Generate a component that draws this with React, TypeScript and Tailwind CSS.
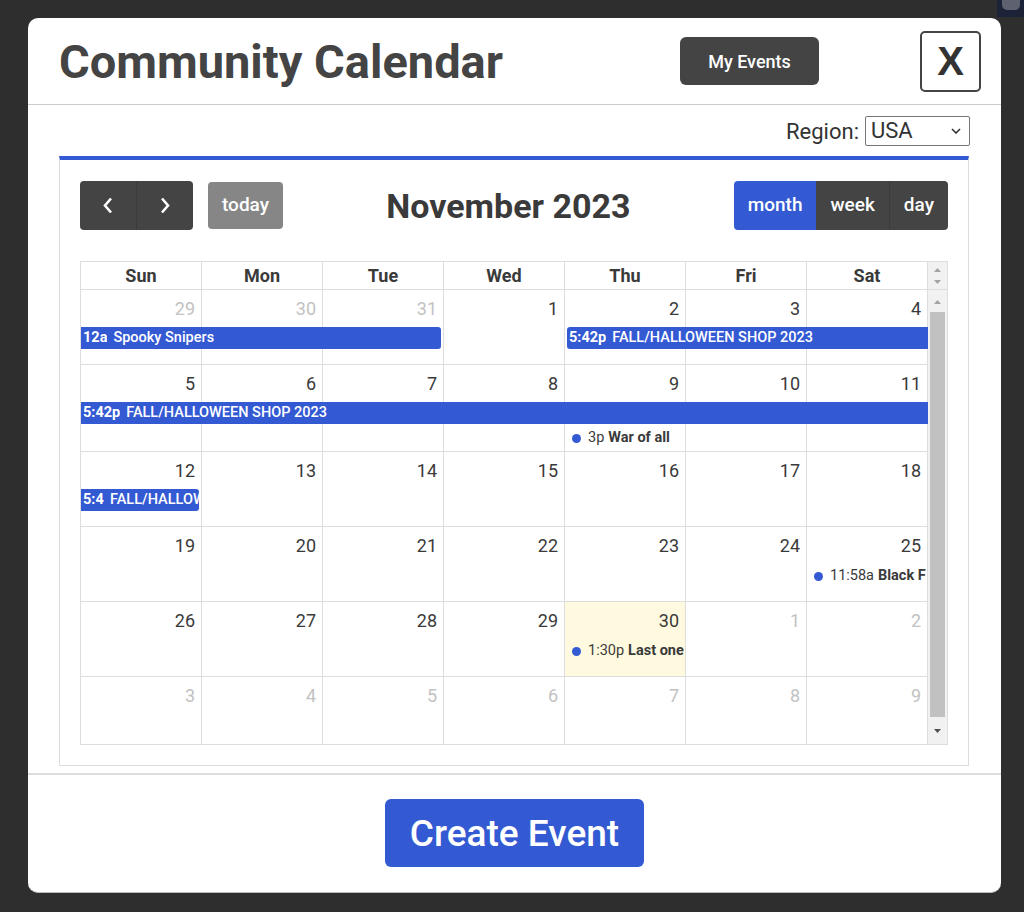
import React from 'react';

type Day = { n: number; other?: boolean; today?: boolean };
type Bar = { col: number; span: number; row: number; time: string; title: string; roundL: boolean; roundR: boolean; timeW?: string };
type Dot = { col: number; row: number; time: string; title: string };
type Week = { h: string; days: Day[]; bars: Bar[]; dots: Dot[] };

const DAY_NAMES = ['Sun', 'Mon', 'Tue', 'Wed', 'Thu', 'Fri', 'Sat'];

const COL_START = ['col-start-1', 'col-start-2', 'col-start-3', 'col-start-4', 'col-start-5', 'col-start-6', 'col-start-7'];
const COL_SPAN = ['col-span-1', 'col-span-2', 'col-span-3', 'col-span-4', 'col-span-5', 'col-span-6', 'col-span-7'];
const ROW_START = ['row-start-1', 'row-start-2', 'row-start-3'];

const mk = (nums: number[], otherUntil = -1, otherFrom = 99, today = -1): Day[] =>
  nums.map((n, i) => ({ n, other: i <= otherUntil || i >= otherFrom, today: i === today }));

const WEEKS: Week[] = [
  {
    h: 'h-[75px]',
    days: mk([29, 30, 31, 1, 2, 3, 4], 2),
    bars: [
      { col: 1, span: 3, row: 2, time: '12a', title: 'Spooky Snipers', roundL: false, roundR: true },
      { col: 5, span: 3, row: 2, time: '5:42p', title: 'FALL/HALLOWEEN SHOP 2023', roundL: true, roundR: false },
    ],
    dots: [],
  },
  {
    h: 'h-[87px]',
    days: mk([5, 6, 7, 8, 9, 10, 11]),
    bars: [{ col: 1, span: 7, row: 2, time: '5:42p', title: 'FALL/HALLOWEEN SHOP 2023', roundL: false, roundR: false }],
    dots: [{ col: 5, row: 3, time: '3p', title: 'War of all' }],
  },
  {
    h: 'h-[75px]',
    days: mk([12, 13, 14, 15, 16, 17, 18]),
    bars: [{ col: 1, span: 1, row: 2, time: '5:42p', title: 'FALL/HALLOWEEN SHOP 2023', roundL: false, roundR: true, timeW: 'w-[21px]' }],
    dots: [],
  },
  {
    h: 'h-[75px]',
    days: mk([19, 20, 21, 22, 23, 24, 25]),
    bars: [],
    dots: [{ col: 7, row: 2, time: '11:58a', title: 'Black Friday' }],
  },
  {
    h: 'h-[75px]',
    days: mk([26, 27, 28, 29, 30, 1, 2], -1, 5, 4),
    bars: [],
    dots: [{ col: 5, row: 2, time: '1:30p', title: 'Last one' }],
  },
  {
    h: 'h-[75px]',
    days: mk([3, 4, 5, 6, 7, 8, 9], 6),
    bars: [],
    dots: [],
  },
];

function Tri({ up, color }: { up: boolean; color: string }) {
  return (
    <svg width="7" height="4" viewBox="0 0 7 4">
      <polygon points={up ? '3.5,0 7,4 0,4' : '0,0 7,0 3.5,4'} fill={color} />
    </svg>
  );
}

function WeekRow({ week, last }: { week: Week; last: boolean }) {
  return (
    <div className={`${week.h} shrink-0 grid grid-cols-7 grid-rows-[37px_24px_auto_1fr] ${last ? '' : 'border-b border-[#ddd]'}`}>
      {week.days.map((d, i) => (
        <div
          key={i}
          className={`${COL_START[i]} row-span-full border-r border-[#ddd] ${d.today ? 'bg-[#fffadf]' : ''}`}
        >
          <div className={`h-[37px] pt-[8px] pr-[6px] text-right text-[18px] leading-[22px] ${d.other ? 'text-[#c2c2c2]' : 'text-[#3a3a3a]'}`}>
            {d.n}
          </div>
        </div>
      ))}
      {week.bars.map((b, i) => (
        <div
          key={'b' + i}
          className={`${COL_START[b.col - 1]} ${COL_SPAN[b.span - 1]} ${ROW_START[b.row - 1]} h-[22px] bg-[#3359d3] text-white flex items-center pl-[2px] overflow-hidden whitespace-nowrap text-[14.5px] leading-[22px] ${b.roundL ? 'rounded-l-[3px] ml-[2px]' : ''} ${b.roundR ? 'rounded-r-[3px] mr-[3px]' : ''}`}
        >
          <span className={`font-bold mr-[6px] overflow-hidden shrink-0 ${b.timeW ?? ''}`}>{b.time}</span>
          <span className="font-medium overflow-hidden">{b.title}</span>
        </div>
      ))}
      {week.dots.map((e, i) => (
        <div
          key={'d' + i}
          className={`${COL_START[e.col - 1]} col-span-1 ${ROW_START[e.row - 1]} h-[22px] mt-[1px] mr-[2px] flex items-center pl-[7px] overflow-hidden whitespace-nowrap text-[14.5px] text-[#3a3a3a]`}
        >
          <span className="w-[9px] h-[9px] rounded-full bg-[#3359d3] shrink-0 mr-[7px]" />
          <span className="mr-[4px]">{e.time}</span>
          <span className="font-bold">{e.title}</span>
        </div>
      ))}
    </div>
  );
}

export default function App() {
  return (
    <div className="w-[1024px] h-[912px] bg-[#2e2e2e] pt-[18px] pl-[28px] relative overflow-hidden font-['Roboto',sans-serif]">
      {/* bit of the page behind the overlay */}
      <div className="absolute top-0 right-0 w-[27px] h-[17px] bg-[#1c2238] flex items-start justify-center">
        <div className="w-[18px] h-[10px] rounded-b-[5px] bg-[#5d6170]" />
      </div>

      <div className="w-[973px] h-[875px] bg-white rounded-[10px] flex flex-col overflow-hidden border-b border-[#bbb]">
        {/* Header */}
        <div className="h-[87px] shrink-0 border-b border-[#ccc] flex items-center pl-[31px] pr-[20px]">
          <h1 className="text-[47px] font-bold text-[#444] leading-none">Community Calendar</h1>
          <button className="ml-auto w-[139px] h-[48px] bg-[#444] rounded-[6px] text-white text-[18px] font-medium">
            My Events
          </button>
          <button className="ml-[101px] w-[61px] h-[61px] border-2 border-[#444] rounded-[5px] text-[40px] font-bold text-[#333] flex items-center justify-center leading-none font-['Liberation_Sans',sans-serif]">
            X
          </button>
        </div>

        {/* Body */}
        <div className="flex-1 flex flex-col px-[31px]">
          <div className="mt-[11px] h-[30px] flex justify-end items-center gap-[6px] text-[#333]">
            <span className="text-[22px]">Region:</span>
            <div className="w-[105px] h-[30px] border border-[#767676] rounded-[2px] flex items-center pl-[5px] pr-[8px] text-[22px] leading-none">
              <span>USA</span>
              <svg className="ml-auto" width="10" height="6" viewBox="0 0 10 6">
                <polyline points="1,1 5,5 9,1" fill="none" stroke="#333" strokeWidth="1.6" />
              </svg>
            </div>
          </div>

          {/* Calendar */}
          <div className="mt-[10px] w-[910px] border border-[#ddd] border-t-4 border-t-[#3359d3] pt-[21px] px-[20px] pb-[20px]">
            <div className="h-[49px] flex items-center justify-between">
              <div className="flex items-center gap-[15px]">
                <div className="flex h-[49px] rounded-[4px] overflow-hidden bg-[#444]">
                  <button className="w-[56px] h-full flex items-center justify-center">
                    <svg width="12" height="17" viewBox="0 0 12 17">
                      <polyline points="9,1.5 3,8.5 9,15.5" fill="none" stroke="white" strokeWidth="2.6" />
                    </svg>
                  </button>
                  <button className="w-[57px] h-full flex items-center justify-center border-l border-[#3b3b3b]">
                    <svg width="12" height="17" viewBox="0 0 12 17">
                      <polyline points="3,1.5 9,8.5 3,15.5" fill="none" stroke="white" strokeWidth="2.6" />
                    </svg>
                  </button>
                </div>
                <button className="h-[47px] px-[14px] rounded-[4px] bg-[#868686] text-white text-[19px] font-medium">today</button>
              </div>
              <h2 className="text-[34px] font-bold text-[#3a3a3a] leading-none">November 2023</h2>
              <div className="flex h-[49px] rounded-[4px] overflow-hidden text-white text-[19px] font-medium">
                <button className="px-[14px] bg-[#3359d3]">month</button>
                <button className="px-[14px] bg-[#444]">week</button>
                <button className="px-[14px] bg-[#444] border-l border-[#3b3b3b]">day</button>
              </div>
            </div>

            {/* Grid */}
            <div className="mt-[31px] h-[484px] border border-[#ddd] flex flex-col">
              <div className="h-[28px] shrink-0 flex border-b border-[#ddd]">
                <div className="flex-1 grid grid-cols-7">
                  {DAY_NAMES.map((d) => (
                    <div key={d} className="border-r border-[#ddd] flex items-center justify-center text-[18px] font-bold text-[#3a3a3a]">
                      {d}
                    </div>
                  ))}
                </div>
                <div className="w-[19px] bg-[#f1f1f1] flex flex-col items-center pt-[6px] gap-[8px]">
                  <Tri up color="#a3a3a3" />
                  <Tri up={false} color="#a3a3a3" />
                </div>
              </div>
              <div className="flex-1 flex min-h-0">
                <div className="flex-1 flex flex-col overflow-hidden">
                  {WEEKS.map((w, i) => (
                    <WeekRow key={i} week={w} last={i === WEEKS.length - 1} />
                  ))}
                </div>
                <div className="w-[19px] bg-[#f1f1f1] flex flex-col">
                  <div className="h-[22px] flex items-center justify-center pt-[2px]">
                    <Tri up color="#a3a3a3" />
                  </div>
                  <div className="h-[405px] mx-[2px] bg-[#c1c1c1]" />
                  <div className="flex-1 flex items-center justify-center">
                    <Tri up={false} color="#505050" />
                  </div>
                </div>
              </div>
            </div>
          </div>
        </div>

        {/* Footer */}
        <div className="h-[119px] shrink-0 border-t-2 border-[#ddd] flex justify-center pt-[24px]">
          <button className="w-[259px] h-[68px] bg-[#3359d3] rounded-[6px] text-white text-[37px] font-medium pt-[2px]">
            Create Event
          </button>
        </div>
      </div>
    </div>
  );
}
